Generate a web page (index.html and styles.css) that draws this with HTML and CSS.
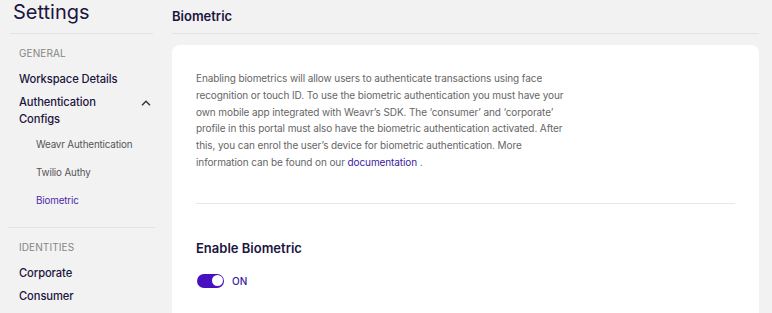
FILE: index.html
```html
<!DOCTYPE html>
<html lang="en">
<head>
<meta charset="utf-8">
<title>Settings - Biometric</title>
<link rel="stylesheet" href="styles.css">
</head>
<body>
<div class="layout">
  <aside class="sidebar">
    <div class="side-title">Settings</div>
    <div class="side-group">
      <div class="group-label">GENERAL</div>
      <a class="nav-item">Workspace Details</a>
      <div class="nav-parent">
        <span>Authentication Configs</span>
        <svg class="chev" width="10" height="6" viewBox="0 0 10 6"><path d="M1 5.2 L5 1.2 L9 5.2" fill="none" stroke="#333" stroke-width="1.4"/></svg>
      </div>
      <a class="nav-sub">Weavr Authentication</a>
      <a class="nav-sub">Twilio Authy</a>
      <a class="nav-sub active">Biometric</a>
    </div>
    <div class="side-group bordered">
      <div class="group-label">IDENTITIES</div>
      <a class="nav-item">Corporate</a>
      <a class="nav-item">Consumer</a>
    </div>
  </aside>
  <main class="main">
    <div class="main-title">Biometric</div>
    <section class="card">
      <p class="desc">Enabling biometrics will allow users to authenticate transactions using face recognition or touch ID. To use the biometric authentication you must have your own mobile app integrated with Weavr’s SDK. The ‘consumer’ and ‘corporate’ profile in this portal must also have the biometric authentication activated. After this, you can enrol the user’s device for biometric authentication. More information can be found on our <a class="link">documentation</a>&nbsp;.</p>
      <hr class="divider">
      <h3 class="sec-title">Enable Biometric</h3>
      <div class="toggle-row">
        <span class="toggle"><span class="knob"></span></span>
        <span class="toggle-label">ON</span>
      </div>
    </section>
  </main>
</div>
</body>
</html>
```

FILE: styles.css
```css
* { box-sizing: border-box; }
html, body { margin: 0; padding: 0; }
body {
  background: #f2f2f2;
  font-family: Inter, "Noto Sans", sans-serif;
  color: #1b1540;
  overflow: hidden;
}
.layout {
  display: flex;
  height: 313px;
  overflow: hidden;
}
.sidebar {
  width: 162px;
  flex: none;
  padding: 0 9px 0 10px;
}
.side-title {
  height: 34px;
  padding-left: 3px;
  font-size: 20px;
  line-height: 24px;
  font-weight: 400;
  color: #1b1540;
  border-bottom: 1px solid #e3e3e3;
}
.side-group {
  padding: 11px 0 0 9px;
  display: flex;
  flex-direction: column;
}
.side-group.bordered {
  border-top: 1px solid #e3e3e3;
  margin: 18px -2px 0 -2px;
  padding-left: 11px;
  padding-top: 11px;
}
.group-label {
  font-size: 10px;
  line-height: 16px;
  color: #858585;
  letter-spacing: 0.1px;
  margin-bottom: 10px;
}
.nav-item {
  font-size: 11.2px;
  font-weight: 500;
  line-height: 17px;
  letter-spacing: -0.1px;
  color: #1b1540;
  margin-bottom: 6px;
}
.nav-parent {
  display: flex;
  justify-content: space-between;
  align-items: flex-start;
  font-size: 11.2px;
  font-weight: 500;
  line-height: 17px;
  letter-spacing: -0.1px;
  color: #1b1540;
}
.nav-parent span { width: 100px; }
.chev { margin-top: 6px; margin-right: 2px; }
.nav-sub {
  font-size: 9.8px;
  line-height: 16px;
  letter-spacing: -0.15px;
  color: #555;
  padding-left: 17px;
  margin-top: 12px;
}
.nav-parent + .nav-sub { margin-top: 9px; }
.nav-sub.active { color: #4a2aa8; }
.main {
  flex: 1;
  padding: 0 13px 0 10px;
  display: flex;
  flex-direction: column;
}
.main-title {
  height: 34px;
  flex: none;
  font-size: 13px;
  font-weight: 600;
  line-height: 33px;
  color: #1b1540;
  border-bottom: 1px solid #e3e3e3;
}
.card {
  flex: 1;
  margin-top: 11px;
  background: #fff;
  border-radius: 8px 8px 0 0;
  padding: 25px 24px 0;
}
.desc {
  margin: 0;
  max-width: 372px;
  font-size: 10px;
  line-height: 16.8px;
  letter-spacing: -0.1px;
  color: #666;
}
.link { color: #3a1a9e; text-decoration: none; }
.divider {
  border: 0;
  border-top: 1px solid #e8e8e8;
  margin: 32px 0 0;
}
.sec-title {
  margin: 34px 0 0;
  font-size: 13px;
  line-height: 20px;
  font-weight: 600;
  color: #1b1540;
}
.toggle-row {
  display: flex;
  align-items: center;
  gap: 8px;
  margin-top: 16px;
  padding-left: 1px;
}
.toggle {
  width: 27px;
  height: 14px;
  border-radius: 7px;
  background: #4811c0;
  position: relative;
  display: inline-block;
}
.knob {
  position: absolute;
  right: 1.5px;
  top: 1.5px;
  width: 11px;
  height: 11px;
  border-radius: 50%;
  background: #fff;
}
.toggle-label {
  font-size: 10px;
  color: #3a1a9e;
  font-weight: 500;
}
```
